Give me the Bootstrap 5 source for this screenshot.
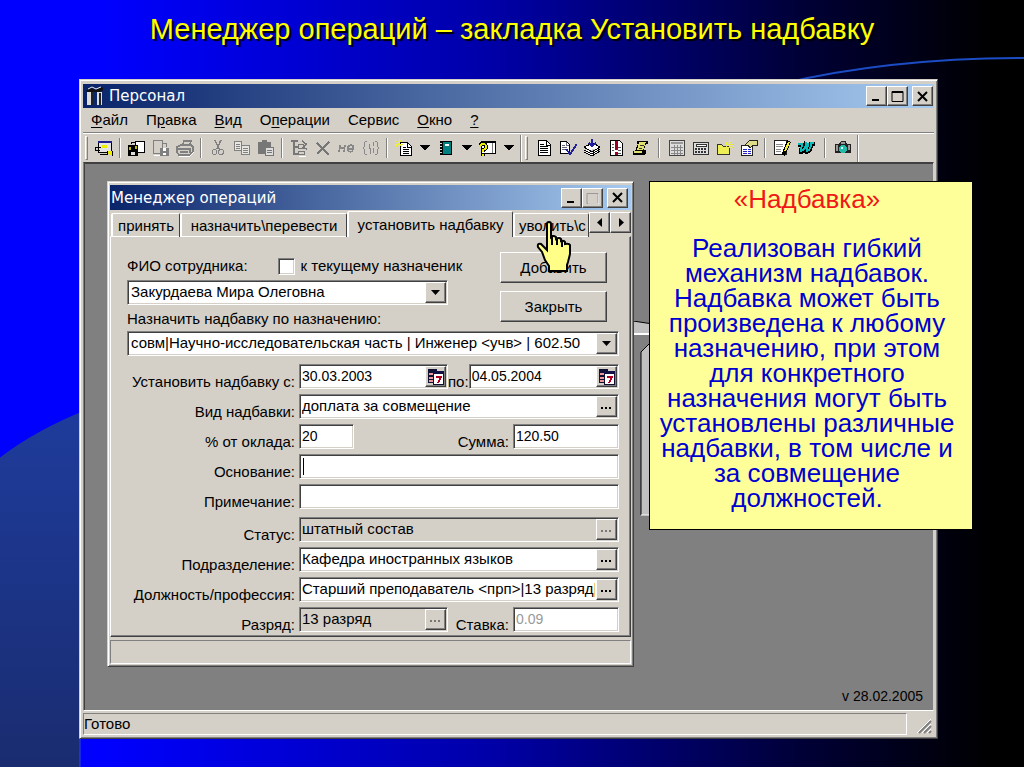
<!DOCTYPE html>
<html lang="ru">
<head>
<meta charset="utf-8">
<meta name="viewport" content="width=device-width, initial-scale=1">
<title>Менеджер операций – закладка Установить надбавку</title>
<link href="https://cdn.jsdelivr.net/npm/bootstrap@5.3.0/dist/css/bootstrap.min.css" rel="stylesheet">
<style>
:root{--face:#d4d0c8;--lite:#fff;--shade:#808080;--dark:#404040}
body{font-family:"Liberation Sans",Arial,sans-serif;font-size:15px;line-height:20px;color:#000;
 background:linear-gradient(90deg,#00f 0,#00f 10%,#0000a8 48%,#000038 78%,#000 97%) #000;min-height:100vh}
.backdrop{inset:0;z-index:0}
.slide{z-index:1;padding:0 86px 29px 79px}
.slide-title{height:79px;padding-top:13px;font-size:29px;line-height:32px;color:#ff0;text-shadow:2px 2px 1px #000;white-space:nowrap;margin:0 -86px 0 -79px}
.win{background:var(--face);border:1px solid;border-color:var(--face) var(--dark) var(--dark) var(--face);
 box-shadow:inset 1px 1px var(--lite),inset -1px -1px var(--shade)}
.app-win{padding:4px 3px 1px 3px}
.caption{background:linear-gradient(90deg,#0a246a,#a6caf0);color:#fff;font-family:"DejaVu Sans",sans-serif;padding:0 1px 0 2px}
.app-cap{height:24px;font-size:15px}
.raised{background:var(--face);border:1px solid;border-color:var(--lite) var(--dark) var(--dark) var(--lite);
 box-shadow:inset -1px -1px var(--shade);border-radius:0;color:#000;padding:0;line-height:1}
.sys{width:21px;height:20px;display:flex;align-items:center;justify-content:center}
.sunken{background:#fff;border:1px solid;border-color:var(--shade) var(--lite) var(--lite) var(--shade);
 box-shadow:inset 1px 1px var(--dark),inset -1px -1px var(--face)}
.off{background:var(--face)}
.menus{height:24px;padding:0 8px;gap:18px;font-size:15px}
.menus a{color:#000;text-decoration:none}
.menus u{text-underline-offset:2px}
.tools{height:30px;border-top:1px solid var(--shade);box-shadow:inset 0 1px var(--lite);padding:2px 0 1px 2px}
.tool{width:24px;height:24px;border:0;background:none;padding:0;display:flex;align-items:center;justify-content:center;flex:none}
.tool.drop{width:18px}
.tool svg{width:18px;height:18px;shape-rendering:crispEdges}
.grip{width:3px;height:24px;border:1px solid;border-color:var(--lite) var(--shade) var(--shade) var(--lite);margin-right:4px}
.tsep{width:2px;height:20px;border-left:1px solid var(--shade);border-right:1px solid var(--lite);margin:0 4px 0 3px}
.tsep.wide{margin:0 5px 0 6px}
.bar-end{width:2px;height:27px;border-left:1px solid var(--shade);border-right:1px solid var(--lite);margin:0 3px 0 2px}
.mdi{background:#808080;border:1px solid;border-color:var(--dark) var(--face) var(--lite) var(--shade);box-shadow:inset 1px 1px var(--dark);padding:18px 10px 0 23px}
.version{height:43px;padding-bottom:4px;font-size:14px;line-height:20px}
.status{height:26px;padding:2px 1px 2px 0}
.panel{border:1px solid;border-color:var(--shade) var(--lite) var(--lite) var(--shade)}
.dlg-status{height:24px;margin-top:3px}
.behind{left:549px;top:158px}
.dialog{max-width:527px;padding:3px 2px 2px 2px;z-index:1}
.dlg-cap{height:25px;font-size:15px;padding:0 3px 0 1px}
.tabs{height:26px;padding:2px 0 0 1px}
.tab-page{border:0;background:none;color:#000;padding:0;height:24px;line-height:24px;border-left:2px solid var(--lite);border-top:1px solid var(--lite);border-right:1px solid var(--dark);white-space:nowrap;overflow:hidden;margin-top:1px;border-radius:2px 2px 0 0;box-shadow:inset 0 -1px var(--lite)}
.tab-page.current{height:26px;line-height:22px;margin-top:-1px;box-shadow:none;position:relative}
.w-a{width:69px}.w-b{width:167px}.w-c{width:166px}
.spin{width:21px;height:21px;display:flex;align-items:center;justify-content:center}
.page{border:1px solid;border-color:transparent var(--dark) var(--dark) var(--lite);box-shadow:inset -1px -1px var(--shade);padding:15px 11px 4px 16px}
.row-line{height:25px;margin-bottom:5px;display:flex}
.row-line>label{line-height:25px;padding:5px 4px 0 0;white-space:nowrap;text-align:right;flex:none}
.row-line>label.first{width:172px}
.row-line>label.tight{padding-right:0}
.entry{display:flex;padding:1px;min-width:0;height:25px}
.entry input,.entry select{border:0;background:none;outline:0;appearance:none;padding:0 1px 1px;flex:1 1 0;min-width:0;width:0;color:#000;font-size:15px;line-height:20px;border-radius:0}
.entry select{padding-left:2px}
.entry input.num{font-size:14px}
.entry input:disabled{opacity:1}
.entry.pale input{color:#999}
.entry .raised{width:21px;flex:none;display:flex;align-items:center;justify-content:center}
.caret{width:1px;margin:2px 0 2px 2px;background:#000}
.person{width:321px}
.half{width:149px}
.quarter{width:55px}
.sum{width:106px}
.cmd{width:107px;height:31px;font-size:15px}
.check{appearance:none;width:17px;height:17px;margin:0 6px 0 30px;border-radius:0}
.post-label{height:22px}
.note{z-index:3;right:51px;top:181px;width:324px;height:349px;background:#ff9;border:1px solid #000;color:#0000d0;font-size:26px;line-height:25px;padding:5px 8px 0 0;white-space:nowrap}
.note h2{font-size:26px;line-height:25px;color:#f01818;margin:0 0 24px;font-weight:400}
.hand{left:427px;top:39px;z-index:4}
</style>
</head>
<body class="position-relative">
<svg class="backdrop position-absolute w-100 h-100" viewBox="0 0 1024 767" preserveAspectRatio="none" aria-hidden="true">
 <defs><linearGradient id="hill" x1="0" y1="0" x2="0" y2="1"><stop offset="0" stop-color="#1e3c9c"/><stop offset="1" stop-color="#1a2c70"/></linearGradient></defs>
 <path d="M0 457Q38 428 90 408Q76 570 80 767H0Z" fill="url(#hill)"/>
 <path d="M80 737V767" stroke="#2a50d0" fill="none"/>
 <path d="M780 84Q890 58 1024 58" stroke="#1c4cc4" stroke-width="2" fill="none"/>
</svg>
<main class="slide position-relative">
<h1 class="slide-title text-center fw-normal">Менеджер операций – закладка Установить надбавку</h1>
<section class="win app-win">
 <header class="caption app-cap d-flex align-items-center">
  <svg width="20" height="20" viewBox="0 0 20 20" class="me-1" aria-hidden="true"><path d="M1 5Q6 0 10 4L17 1Q20 4 15 6H2Z" fill="#111"/><path d="M2 6h5v13H2zM12 6h5v13h-5z" fill="#ddd"/><path d="M6 6h2v13H6zM14 7h2v12h-2z" fill="#222"/><path d="M3 3l4-2 4 2 5-2" stroke="#eee" fill="none"/></svg>
  <span class="flex-fill">Персонал</span>
  <button class="raised sys" aria-label="Свернуть"><svg width="12" height="12"><path d="M1 9h7v2H1z"/></svg></button>
  <button class="raised sys" aria-label="Развернуть"><svg width="13" height="12"><path d="M1 1.500h11v10H1z" fill="none" stroke="#000"/><path d="M1 1h11v2H1z"/></svg></button>
  <button class="raised sys ms-1" aria-label="Закрыть окно"><svg width="11" height="11"><path d="M1 1l9 9M10 1l-9 9" stroke="#000" stroke-width="2"/></svg></button>
 </header>
 <nav class="menus d-flex align-items-center">
  <a href="#"><u>Ф</u>айл</a><a href="#">П<u>р</u>авка</a><a href="#"><u>В</u>ид</a><a href="#">О<u>п</u>ерации</a><a href="#">Сервис</a><a href="#"><u>О</u>кно</a><a href="#"><u>?</u></a>
 </nav>
 <div class="tools d-flex align-items-center" role="toolbar" aria-label="Инструменты">
  <span class="grip"></span>
  <button class="tool" aria-label="Проводник"><svg viewBox="0 0 18 18"><path d="M3.500 2.500h13v11h-13z" fill="#e4e4e4" stroke="#000"/><path d="M3 2h14v2H3z" fill="#20208c"/><path d="M7 6h5v3H7zM13 12h4v4h-3v-1h-1z" fill="#ee0"/><path d="M0 8h6M0 8v3h5M5 15h8M12 12v4M17 12v5" stroke="#000" fill="none"/></svg></button>
  <span class="tsep"></span>
  <button class="tool" aria-label="Сохранить"><svg viewBox="0 0 18 18"><path d="M7.500 2.500h9v11h-9z" fill="#fff" stroke="#000"/><path d="M0 6h10v11H0z"/><path d="M1 8h2v3H1zM7 7h2v3H7z" fill="#bb0"/><path d="M3 13h4v3H3z" fill="#ddd"/><path d="M3 5V3h4" stroke="#000" fill="none"/></svg></button>
  <button class="tool" aria-label="Сохранить как"><svg viewBox="0 0 18 18"><path d="M1.500 1.500h9v13h-9zM10 4h4v4" fill="none" stroke="#808080"/><path d="M8 9h9v8H8z" fill="#808080"/><path d="M11 9h3v3h-3zM11 14h3v2h-3z" fill="#fff"/><path d="M2 16h6" stroke="#fff"/></svg></button>
  <button class="tool" aria-label="Печать"><svg viewBox="0 0 18 18"><path d="M6 7l2-5h7l-2 5M1 8l4-2h10l2 2v5l-3 3H3l-2-3zM2 10h12M4 13h8M14 9v5" fill="none" stroke="#808080" stroke-width="1.500"/><path d="M3 17h11l4-4" stroke="#fff" fill="none"/></svg></button>
  <span class="tsep"></span>
  <button class="tool" aria-label="Вырезать"><svg viewBox="0 0 18 18"><path d="M6 1l4 9M12 1L8 10" stroke="#808080" stroke-width="1.500"/><circle cx="5.500" cy="13" r="2.500" fill="none" stroke="#808080"/><circle cx="12" cy="13" r="2.500" fill="none" stroke="#808080"/></svg></button>
  <button class="tool" aria-label="Копировать"><svg viewBox="0 0 18 18"><path d="M1.500 2.500h7v9h-7zM8.500 6.500h8v9h-8z" fill="#e8e6e0" stroke="#808080"/><path d="M3 5h4M3 7h4M3 9h4M10 9h5M10 11h5M10 13h5" stroke="#808080"/></svg></button>
  <button class="tool" aria-label="Вставить"><svg viewBox="0 0 18 18"><path d="M1 3h4V1h5v2h4v12H1z" fill="#777"/><path d="M8.500 8.500h8v8h-8z" fill="#ddd" stroke="#777"/><path d="M10 11h5M10 13h5" stroke="#777"/></svg></button>
  <span class="tsep"></span>
  <button class="tool" aria-label="Структура"><svg viewBox="0 0 18 18"><path d="M1 2h7M4 3v12h4M4 8h4" stroke="#777" stroke-width="2" fill="none"/><path d="M8.500 5.500h5v4h-5zM8.500 12.500h6v3h-6z" fill="none" stroke="#777"/><path d="M12 2l4 3-3 4M14 9l3 1" stroke="#777" stroke-width="1.500" fill="none"/><path d="M9 17h7" stroke="#fff"/></svg></button>
  <button class="tool" aria-label="Удалить"><svg viewBox="0 0 18 18"><path d="M3 4l12 12M15 3L3 15" stroke="#777" stroke-width="2"/></svg></button>
  <button class="tool" aria-label="Отрицание"><svg viewBox="0 0 18 18"><path d="M2 6l-1 7M7 6l-1 7M2 9h5M10 10h5Q16 6 13 6Q9 7 10 11Q11 14 15 12" fill="none" stroke="#888" stroke-width="1.500"/></svg></button>
  <button class="tool" aria-label="Скобки"><svg viewBox="0 0 18 18"><path d="M5 2Q2 2 3 6Q3 8 1 9Q3 10 3 12Q2 16 5 16M13 2Q16 2 15 6Q15 8 17 9Q15 10 15 12Q16 16 13 16M7 5v4h2M11 3v4M8 10v5M11 9v5" fill="none" stroke="#888"/></svg></button>
  <span class="tsep"></span>
  <button class="tool" aria-label="Новый"><svg viewBox="0 0 18 18"><path d="M5.500 3.500h7l4 4v9h-11z" fill="#fff" stroke="#000"/><path d="M12 3v5h5M8 8h3M8 10h6M8 12h6M8 14h6" stroke="#000" fill="none"/><path d="M0 1l7 7M7 0L1 8M4 0v8M0 5h8" stroke="#ee3"/></svg></button>
  <button class="tool drop" aria-label="Список новых"><svg viewBox="0 0 18 18"><path d="M4 6h10l-5 6z"/></svg></button>
  <button class="tool" aria-label="Справочник"><svg viewBox="0 0 18 18"><path d="M3 2h12v14H3z"/><path d="M6 3h8v12H6z" fill="#008080"/><path d="M8 5h4v2H8z" fill="#fff"/><path d="M3 4h2M3 7h2M3 10h2M3 13h2" stroke="#ddd"/></svg></button>
  <button class="tool drop" aria-label="Список справочников"><svg viewBox="0 0 18 18"><path d="M4 6h10l-5 6z"/></svg></button>
  <button class="tool" aria-label="Запрос"><svg viewBox="0 0 18 18"><path d="M2.500 2.500h14v12h-14z" fill="#fff" stroke="#000"/><path d="M13 3v11" stroke="#777"/><path d="M2 2h15v2H2z"/><path d="M1 8q0-3 3-3t3 3q0 2-3 3v2M4 15v2" stroke="#000" stroke-width="4" fill="none"/><path d="M1 8q0-3 3-3t3 3q0 2-3 3v2M4 15v2" stroke="#ee0" stroke-width="2" fill="none"/></svg></button>
  <button class="tool drop" aria-label="Список запросов"><svg viewBox="0 0 18 18"><path d="M4 6h10l-5 6z"/></svg></button>
  <span class="bar-end"></span><span class="grip"></span>
  <button class="tool" aria-label="Документ"><svg viewBox="0 0 18 18"><path d="M3.500 1.500h8l4 4v11h-12z" fill="#fff" stroke="#000"/><path d="M11 2v4h4M5 5h4M5 7h8M5 9h8M5 11h8M5 13h8" stroke="#000" fill="none"/></svg></button>
  <button class="tool" aria-label="Проверить"><svg viewBox="0 0 18 18"><path d="M1.500 2.500h6l3 3v9h-9z" fill="#fff" stroke="#000"/><path d="M3 6h3M3 8h5M3 10h5M7 3v3h3" stroke="#667" fill="none"/><path d="M7 10l4 5 7-10" fill="none" stroke="#2020a0" stroke-width="2"/></svg></button>
  <button class="tool" aria-label="Стопка"><svg viewBox="0 0 18 18"><path d="M1 8l9-4 7 4-8 5zM1 11l8 4 8-5M1 13l8 4 8-5" fill="#fff" stroke="#000"/><path d="M9 0v7M6 4l3 3 4-3" stroke="#2020a0" stroke-width="2" fill="none"/></svg></button>
  <button class="tool" aria-label="Внимание"><svg viewBox="0 0 18 18"><path d="M3.500 1.500h9l3 3v12h-12z" fill="#fff" stroke="#000"/><path d="M5 5h2M5 8h2M5 11h2M11 8h3M11 11h3M11 14h3" stroke="#555"/><path d="M8 2h3v9H8zM8 13h3v3H8z" fill="#a00020"/></svg></button>
  <button class="tool" aria-label="Приказ"><svg viewBox="0 0 18 18"><path d="M6 2h11v3h-2l-2 6h2v3l-2 2H3q-3-2 0-4h1l3-7H6z"/><path d="M8 3h7l-3 8H6zM3 12h8v2H3z" fill="#e0e070"/><path d="M9 6h4M8 9h3" stroke="#333"/></svg></button>
  <span class="tsep wide"></span>
  <button class="tool" aria-label="Таблица"><svg viewBox="0 0 18 18"><path d="M1.500 1.500h15v15h-15z" fill="#ddd" stroke="#444"/><path d="M3 3h12v2H3z" fill="#999"/><path d="M3 8h12M3 11h12M3 14h12M6 6v10M9 6v10M12 6v10" stroke="#888"/></svg></button>
  <button class="tool" aria-label="Калькулятор"><svg viewBox="0 0 18 18"><path d="M1.500 3.500h15v12h-15z" fill="#ddd" stroke="#333"/><path d="M4 5h10v2H4z" fill="#fff" stroke="#333"/><path d="M3 10h12M3 13h12" stroke="#333" stroke-dasharray="2 1" stroke-width="2"/></svg></button>
  <button class="tool" aria-label="Новая папка"><svg viewBox="0 0 18 18"><path d="M1.500 5.500h4l2 2h6v8h-12z" fill="#ee5" stroke="#333"/><path d="M9 3l8 6M16 2l-6 6M13 0v9M9 5h8" stroke="#ee3"/></svg></button>
  <button class="tool" aria-label="Свойства"><svg viewBox="0 0 18 18"><path d="M1.500 6.500h11v10h-11z" fill="#fff" stroke="#222"/><path d="M3 10h4M3 12h4M3 14h4M8 10h3M8 12h3M8 14h3" stroke="#2222cc"/><path d="M5 6l5-5h7v5h-4l-3 3-2-3z" fill="#dd8" stroke="#222"/></svg></button>
  <span class="tsep"></span>
  <button class="tool" aria-label="Редактировать"><svg viewBox="0 0 18 18"><path d="M1.500 1.500h12v14h-12z" fill="#fff" stroke="#222"/><path d="M3 5h7M3 7h7M3 10h5M3 12h5" stroke="#888"/><path d="M16 2l-4 10-2 4" stroke="#000" stroke-width="4"/><path d="M16 3l-4 9" stroke="#ee3" stroke-width="2"/></svg></button>
  <button class="tool" aria-label="Экспорт"><svg viewBox="0 0 18 18"><path d="M1 6h4l-1 7q5-1 5-8l2 1-1 7q4-1 4-8h4" fill="none" stroke="#000" stroke-width="4"/><path d="M1 5h4l-1 7q5-1 5-8l2 1-1 7q4-1 4-8h3" fill="none" stroke="#10b8b8" stroke-width="2"/></svg></button>
  <span class="tsep wide"></span>
  <button class="tool" aria-label="Снимок"><svg viewBox="0 0 18 18"><path d="M1 5h4l2-3h5l1 3h4v9H1z" fill="#222"/><path d="M7 3h4v2H7zM2 6h2v6H2zM14 6h2v5h-2z" fill="#999"/><circle cx="9" cy="10" r="4" fill="#2ba"/><circle cx="8" cy="9" r="1.500" fill="#cff"/></svg></button>
  <span class="bar-end"></span>
 </div>
 <div class="mdi position-relative">
  <svg class="behind position-absolute" width="20" height="198" viewBox="0 0 20 198" aria-hidden="true"><path d="M0 0l20 3v9H0z" fill="#c0c0c0"/><path d="M0 0l20 3" stroke="#000"/><path d="M0 13h20" stroke="#fff" stroke-width="2"/><path d="M8 31l10-10v173H8z" fill="#c0c0c0"/><path d="M8 194V31l10-10" stroke="#000" fill="none"/><path d="M8 194h12" stroke="#fff"/></svg>
  <section class="win dialog position-relative">
   <header class="caption dlg-cap d-flex align-items-center">
    <span class="flex-fill">Менеджер операций</span>
    <button class="raised sys" aria-label="Свернуть"><svg width="12" height="12"><path d="M1 9h7v2H1z"/></svg></button>
    <button class="raised sys" aria-label="Развернуть" disabled><svg width="13" height="12"><path d="M1 1.500h11v10H1z" fill="none" stroke="#999"/><path d="M2 12h11V2" fill="none" stroke="#fff"/></svg></button>
    <button class="raised sys ms-1" aria-label="Закрыть окно"><svg width="11" height="11"><path d="M1 1l9 9M10 1l-9 9" stroke="#000" stroke-width="2"/></svg></button>
   </header>
   <div class="tabs d-flex" role="tablist">
    <button class="tab-page w-a" role="tab">принять</button>
    <button class="tab-page w-b" role="tab">назначить\перевести</button>
    <button class="tab-page w-c current" role="tab" aria-selected="true">установить надбавку</button>
    <button class="tab-page flex-fill text-start ps-1" role="tab">уволить\с</button>
    <button class="raised spin" aria-label="Назад"><svg width="8" height="10"><path d="M6 0v9L1 4.500z"/></svg></button>
    <button class="raised spin" aria-label="Вперёд"><svg width="8" height="10"><path d="M2 0v9l5-4.500z"/></svg></button>
   </div>
   <form class="page">
    <div class="d-flex justify-content-between pe-2 me-1">
     <div>
      <div class="d-flex align-items-center mt-1 mb-1">
       <label for="fio">ФИО сотрудника:</label>
       <input type="checkbox" id="cur" class="sunken check"><label for="cur">к текущему назначеник</label>
      </div>
      <div class="sunken entry person mb-1"><select id="fio"><option>Закурдаева Мира Олеговна</option></select><span class="raised"><svg width="10" height="6"><path d="M0 0h9l-4.500 5z"/></svg></span></div>
      <label for="post" class="d-block post-label">Назначить надбавку по назначению:</label>
     </div>
     <div class="d-flex flex-column gap-2">
      <button type="button" class="raised cmd">Добавить</button>
      <button type="button" class="raised cmd">Закрыть</button>
     </div>
    </div>
    <div class="sunken entry mb-2"><select id="post"><option>совм|Научно-исследовательская часть | Инженер &lt;учв&gt; | 602.50</option></select><span class="raised"><svg width="10" height="6"><path d="M0 0h9l-4.500 5z"/></svg></span></div>
    <div class="row-line"><label class="first" for="from">Установить надбавку с:</label>
     <div class="sunken entry half"><input class="num" id="from" value="30.03.2003"><button type="button" class="raised" aria-label="Календарь"><svg width="17" height="17" shape-rendering="crispEdges"><path d="M1 1h9v14H1z" fill="#113"/><path d="M2 5h4v2H2zM2 9h4v2H2zM2 12h4v2H2z" fill="#e99"/><path d="M6.500 3.500h10v13h-10z" fill="#fff" stroke="#113"/><path d="M6 3h11v3H6z" fill="#114"/><path d="M9 9h5l-3 6" stroke="#b00020" stroke-width="2" fill="none"/></svg></button></div>
     <label class="tight" for="to">по:</label>
     <div class="sunken entry flex-fill"><input class="num" id="to" value="04.05.2004"><button type="button" class="raised" aria-label="Календарь"><svg width="17" height="17" shape-rendering="crispEdges"><path d="M1 1h9v14H1z" fill="#113"/><path d="M2 5h4v2H2zM2 9h4v2H2zM2 12h4v2H2z" fill="#e99"/><path d="M6.500 3.500h10v13h-10z" fill="#fff" stroke="#113"/><path d="M6 3h11v3H6z" fill="#114"/><path d="M9 9h5l-3 6" stroke="#b00020" stroke-width="2" fill="none"/></svg></button></div></div>
    <div class="row-line"><label class="first" for="kind">Вид надбавки:</label>
     <div class="sunken entry flex-fill"><input id="kind" value="доплата за совмещение"><button type="button" class="raised" aria-label="Выбрать вид"><svg width="11" height="6"><path d="M0 3h2v2H0zM4 3h2v2H4zM8 3h2v2H8z"/></svg></button></div></div>
    <div class="row-line"><label class="first" for="pct">% от оклада:</label>
     <div class="sunken entry quarter"><input class="num" id="pct" value="20"></div>
     <label class="ms-auto" for="sum">Сумма:</label><div class="sunken entry sum"><input class="num" id="sum" value="120.50"></div></div>
    <div class="row-line"><label class="first" for="base">Основание:</label><div class="sunken entry flex-fill"><span class="caret"></span><input id="base"></div></div>
    <div class="row-line mb-2"><label class="first" for="memo">Примечание:</label><div class="sunken entry flex-fill"><input id="memo"></div></div>
    <div class="row-line"><label class="first" for="stat">Статус:</label>
     <div class="sunken entry off flex-fill"><input id="stat" value="штатный состав" disabled><button type="button" class="raised" disabled aria-label="Выбрать статус"><svg width="11" height="6" fill="#777"><path d="M0 3h2v2H0zM4 3h2v2H4zM8 3h2v2H8z"/></svg></button></div></div>
    <div class="row-line"><label class="first" for="dept">Подразделение:</label>
     <div class="sunken entry flex-fill"><input id="dept" value="Кафедра иностранных языков"><button type="button" class="raised" aria-label="Выбрать подразделение"><svg width="11" height="6"><path d="M0 3h2v2H0zM4 3h2v2H4zM8 3h2v2H8z"/></svg></button></div></div>
    <div class="row-line"><label class="first" for="job">Должность/профессия:</label>
     <div class="sunken entry flex-fill"><input id="job" value="Старший преподаватель &lt;прп&gt;|13 разряд|"><button type="button" class="raised" aria-label="Выбрать должность"><svg width="11" height="6"><path d="M0 3h2v2H0zM4 3h2v2H4zM8 3h2v2H8z"/></svg></button></div></div>
    <div class="row-line mb-0"><label class="first" for="grade">Разряд:</label>
     <div class="sunken entry off half"><input id="grade" value="13 разряд" disabled><button type="button" class="raised" disabled aria-label="Выбрать разряд"><svg width="11" height="6" fill="#777"><path d="M0 3h2v2H0zM4 3h2v2H4zM8 3h2v2H8z"/></svg></button></div>
     <label class="ms-auto" for="rate">Ставка:</label><div class="sunken entry pale sum"><input class="num" id="rate" value="0.09" disabled></div></div>
   </form>
   <div class="panel dlg-status"></div>
   <svg class="hand position-absolute" width="38" height="52" viewBox="0 0 38 52" aria-hidden="true"><path d="M12 3q0-2 2-2t2 2v13q2-2 5 0v2q3-2 5 0v2q3-1 4 1v2q4-1 5 1v9l-2 8-1 3v6H14v-5l-4-6-3-8-4-5q-1-4 3-3l4 4 2 2z" fill="#ff8" stroke="#000" stroke-width="2"/><path d="M17 14v10M22 17v7M27 20v6" stroke="#000" stroke-width="2"/></svg>
  </section>
  <div class="version d-flex align-items-end justify-content-end">v 28.02.2005</div>
 </div>
 <footer class="status d-flex">
  <div class="panel flex-fill">Готово</div>
  <svg width="26" height="22" viewBox="0 0 26 22" aria-hidden="true"><path d="M12 20L24 8M17 20l7-7M22 20l2-2" stroke="#808080" stroke-width="2"/><path d="M10 20L24 6M15 20l9-9M20 20l4-4" stroke="#fff"/></svg>
 </footer>
</section>
</main>
<aside class="note position-absolute text-center">
 <h2>«Надбавка»</h2>
 Реализован гибкий<br>механизм надбавок.<br>Надбавка может быть<br>произведена к любому<br>назначению, при этом<br>для конкретного<br>назначения могут быть<br>установлены различные<br>надбавки, в том числе и<br>за совмещение<br>должностей.
</aside>
<script src="https://cdn.jsdelivr.net/npm/bootstrap@5.3.0/dist/js/bootstrap.bundle.min.js"></script>
</body>
</html>
